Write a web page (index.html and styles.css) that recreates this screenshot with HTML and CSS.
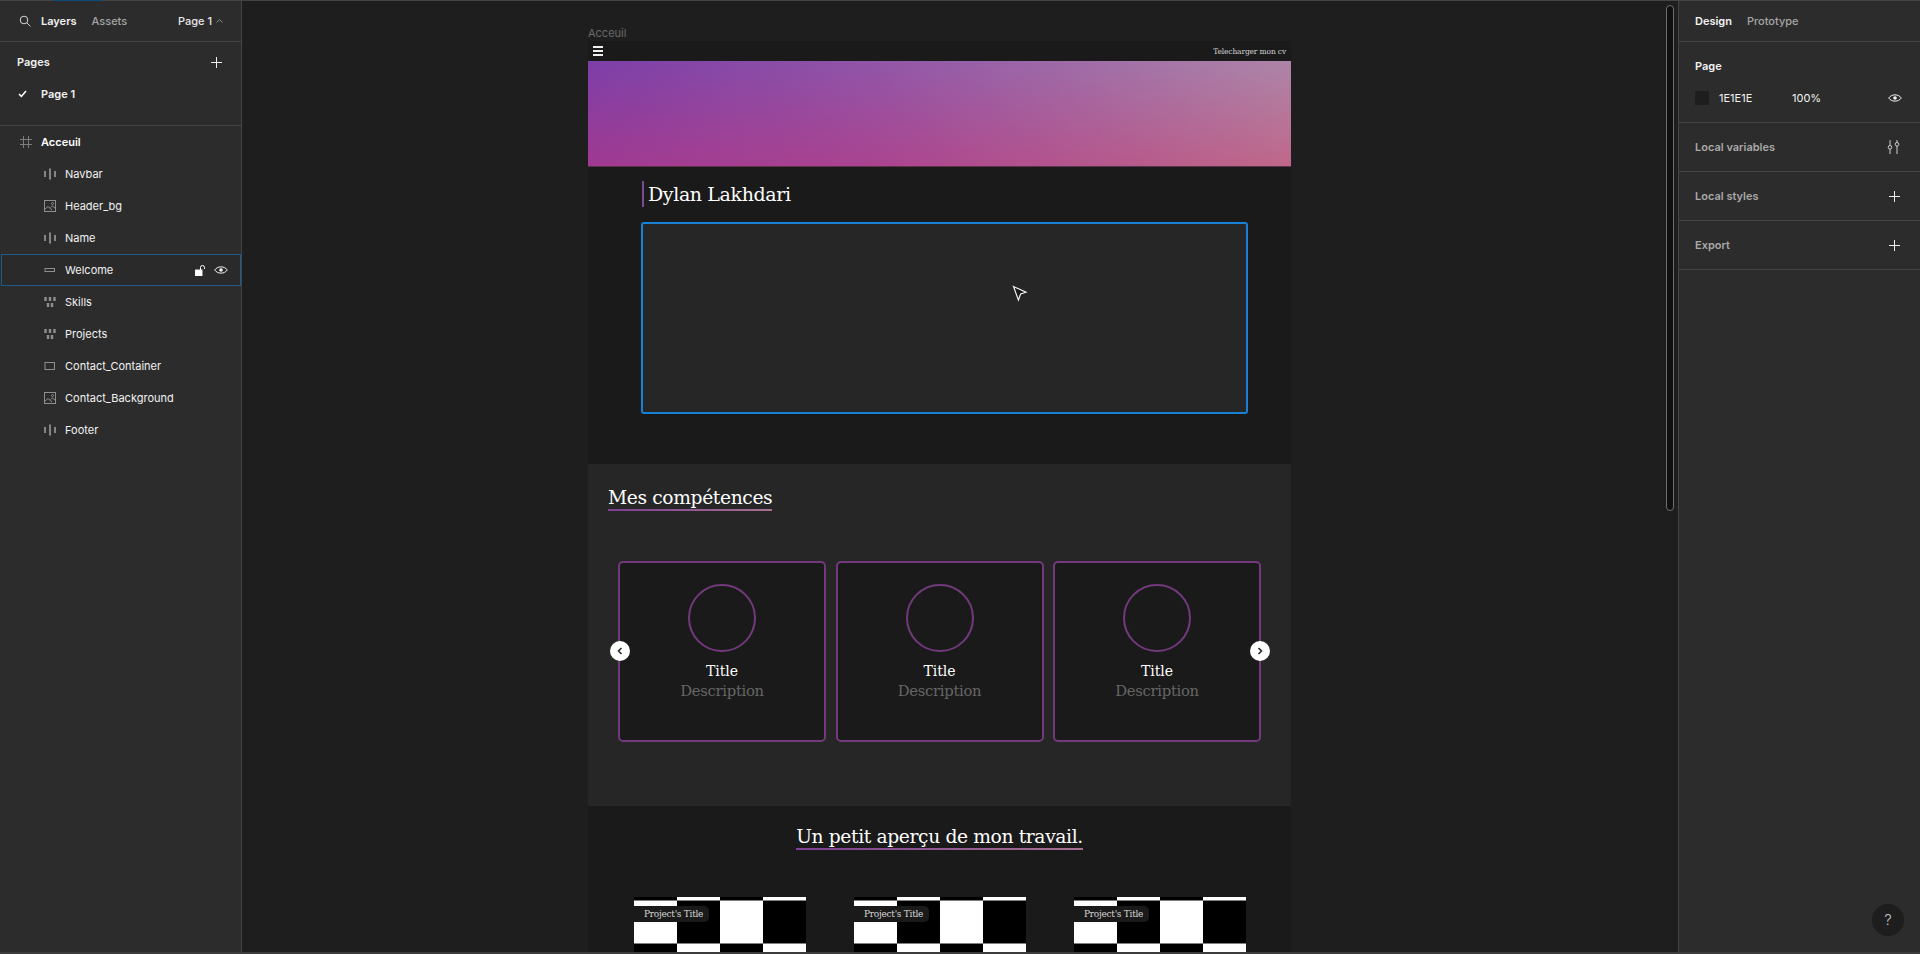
FILE: index.html
```html
<!DOCTYPE html>
<html lang="fr">
<head>
<meta charset="utf-8">
<title>Acceuil</title>
<link rel="stylesheet" href="styles.css">
</head>
<body>
<div class="app">
  <span class="tab-mark"></span>
  <aside class="panel left">
    <header class="tabs left-tabs">
      <svg class="ico search" viewBox="0 0 12 12"><circle cx="5" cy="5" r="3.8"/><path d="M8 8l3.4 3.4"/></svg>
      <span class="tab on">Layers</span>
      <span class="tab">Assets</span>
      <span class="page-pick">Page 1<svg class="chev" viewBox="0 0 7 4"><path d="M.5 3.5L3.5.7l3 2.8"/></svg></span>
    </header>
    <section class="pages">
      <div class="pages-head"><b>Pages</b><svg class="ico plus" viewBox="0 0 11 11"><path d="M5.5 0v11M0 5.5h11"/></svg></div>
      <div class="page-row"><svg class="check" viewBox="0 0 9 8"><path d="M1 4l2.4 2.4L8 1"/></svg><b>Page 1</b></div>
    </section>
    <ul class="layers">
      <li class="layer root"><svg class="lico hash" viewBox="0 0 12 12"><path d="M3.5 0v12M8.5 0v12M0 3.500h12M0 8.500h12"/></svg><span>Acceuil</span></li>
      <li class="layer"><svg class="lico" viewBox="0 0 12 12"><path class="fat" d="M1 3v6M6 .5v11M11 3v6"/></svg><span>Navbar</span></li>
      <li class="layer"><svg class="lico" viewBox="0 0 12 12"><rect x=".5" y=".5" width="11" height="11"/><path d="M.5 9.500l3.500-3 4 3.500M6.500 7.500l2-1.500 3 2.500"/><circle cx="8.500" cy="3.500" r="1"/></svg><span>Header_bg</span></li>
      <li class="layer"><svg class="lico" viewBox="0 0 12 12"><path class="fat" d="M1 3v6M6 .5v11M11 3v6"/></svg><span>Name</span></li>
      <li class="layer selected"><svg class="lico" viewBox="0 0 12 12"><rect x="1" y="4.500" width="9.500" height="3"/></svg><span>Welcome</span>
        <svg class="lock" viewBox="0 0 11 11"><rect x="0" y="5" width="7" height="6" fill="#fff"/><path d="M5.500 5V2.500a2 2 0 0 1 4 0V4" fill="none" stroke="#fff"/></svg>
        <svg class="eye" viewBox="0 0 14 10"><path d="M.7 5C3.500.8 10.500.8 13.300 5 10.500 9.200 3.500 9.200.7 5z"/><circle cx="7" cy="5" r="1.800"/></svg>
      </li>
      <li class="layer"><svg class="lico" viewBox="0 0 12 12"><path class="grid" d="M1.500 1v4M6 1v4M10.500 1v4M4 7v4M8 7v4"/></svg><span>Skills</span></li>
      <li class="layer"><svg class="lico" viewBox="0 0 12 12"><path class="grid" d="M1.500 1v4M6 1v4M10.500 1v4M4 7v4M8 7v4"/></svg><span>Projects</span></li>
      <li class="layer"><svg class="lico" viewBox="0 0 12 12"><rect x="1" y="2.500" width="9.500" height="7"/></svg><span>Contact_Container</span></li>
      <li class="layer"><svg class="lico" viewBox="0 0 12 12"><rect x=".5" y=".5" width="11" height="11"/><path d="M.5 9.500l3.500-3 4 3.500M6.500 7.500l2-1.500 3 2.500"/><circle cx="8.500" cy="3.500" r="1"/></svg><span>Contact_Background</span></li>
      <li class="layer"><svg class="lico" viewBox="0 0 12 12"><path class="fat" d="M1 3v6M6 .5v11M11 3v6"/></svg><span>Footer</span></li>
    </ul>
  </aside>

  <main class="canvas">
    <div class="frame-label">Acceuil</div>
    <div class="frame">
      <nav class="navbar">
        <span class="burger"><i></i><i></i><i></i></span>
        <span class="cv">Telecharger mon cv</span>
      </nav>
      <div class="hero"></div>
      <section class="intro">
        <h1 class="name">Dylan Lakhdari</h1>
        <div class="welcome"></div>
      </section>
      <section class="skills">
        <h2 class="sec-title">Mes compétences</h2>
        <div class="cards">
          <span class="arrow prev"><svg viewBox="0 0 6 8"><path d="M4.500 1L1.500 4l3 3"/></svg></span>
          <article class="card"><div class="ring"></div><h3>Title</h3><p>Description</p></article>
          <article class="card"><div class="ring"></div><h3>Title</h3><p>Description</p></article>
          <article class="card"><div class="ring"></div><h3>Title</h3><p>Description</p></article>
          <span class="arrow next"><svg viewBox="0 0 6 8"><path d="M1.500 1l3 3-3 3"/></svg></span>
        </div>
      </section>
      <section class="projects">
        <h2 class="sec-title center">Un petit aperçu de mon travail.</h2>
        <div class="shots">
          <div class="shot"><span class="shot-label">Project's Title</span></div>
          <div class="shot"><span class="shot-label">Project's Title</span></div>
          <div class="shot"><span class="shot-label">Project's Title</span></div>
        </div>
      </section>
    </div>
    <svg class="cursor" viewBox="0 0 16 18"><path d="M1.500 1.500L14 7.200 8.600 9 6.400 15z"/></svg>
    <div class="scrollbar"></div>
  </main>

  <aside class="panel right">
    <header class="tabs right-tabs">
      <span class="tab on">Design</span>
      <span class="tab">Prototype</span>
    </header>
    <section class="page-props">
      <h4>Page</h4>
      <div class="fill-row">
        <span class="swatch"></span>
        <span class="hex">1E1E1E</span>
        <span class="pct">100%</span>
        <svg class="eye" viewBox="0 0 14 10"><path d="M.7 5C3.500.8 10.500.8 13.300 5 10.500 9.200 3.500 9.200.7 5z"/><circle cx="7" cy="5" r="1.800"/></svg>
      </div>
    </section>
    <section class="prop-row"><span>Local variables</span><svg class="ico tune" viewBox="0 0 13 14"><path d="M3 0v5.500M3 9v5M10 0v2.500M10 6v8"/><circle cx="3" cy="7.300" r="1.800"/><circle cx="10" cy="4.300" r="1.800"/></svg></section>
    <section class="prop-row"><span>Local styles</span><svg class="ico plus" viewBox="0 0 11 11"><path d="M5.500 0v11M0 5.500h11"/></svg></section>
    <section class="prop-row"><span>Export</span><svg class="ico plus" viewBox="0 0 11 11"><path d="M5.500 0v11M0 5.500h11"/></svg></section>
    <span class="help">?</span>
  </aside>
</div>
</body>
</html>
```
FILE: styles.css
```css
* { box-sizing: border-box; }
html, body { margin: 0; height: 954px; overflow: hidden; background: #1e1e1e; }
body { font-family: Inter, "Liberation Sans", sans-serif; font-size: 11px; color: #f2f2f2; }
svg { display: block; fill: none; stroke: currentColor; }
h1, h2, h3, h4, p, ul { margin: 0; padding: 0; list-style: none; font-weight: 400; }

.app { position: relative; display: flex; height: 954px; border-top: 1px solid #444; border-bottom: 2px solid #3c3c3c; }
.tab-mark { position: absolute; left: 53px; top: -1px; width: 49px; height: 1px; background: #0c4a78; }

.panel { width: 242px; flex: none; background: #2c2c2c; position: relative; }
.panel.left { border-right: 1px solid #444; }
.panel.right { border-left: 1px solid #444; }

.tabs { display: flex; align-items: center; height: 41px; border-bottom: 1px solid #444; font-weight: 500; }
.tab { color: #a5a5a5; }
.tab.on { color: #f2f2f2; font-weight: 600; }
.left-tabs { padding-left: 19px; }
.left-tabs .search { width: 12px; height: 12px; margin-right: 10px; color: #d8d8d8; }
.left-tabs .tab + .tab { margin-left: 15px; }
.page-pick { display: flex; align-items: center; margin-left: auto; margin-right: 18px; gap: 4px; color: #e8e8e8; }
.chev { width: 7px; height: 4px; color: #8a8a8a; }
.right-tabs { padding-left: 16px; gap: 15px; }

.pages { height: 84px; border-bottom: 1px solid #444; padding: 0 19px 0 17px; }
.pages-head { display: flex; justify-content: space-between; align-items: center; height: 40px; }
.pages-head b { font-weight: 600; }
.plus { width: 11px; height: 11px; color: #eee; }
.page-row { display: flex; align-items: center; height: 22px; margin-top: 1px; }
.page-row b { font-weight: 600; margin-left: 14px; }
.check { width: 9px; height: 8px; stroke-width: 1.600; margin-left: 1px; color: #fff; }

.layer { display: flex; align-items: center; height: 32px; padding-left: 43px; margin: 0 0 0 1px; width: 240px; }
.layer span { margin-left: 9px; }
.lico { width: 12px; height: 12px; color: #8f8f8f; }
.lico .fat { stroke-width: 1.800; }
.lico .grid { stroke-width: 2.400; }
.layer.root { padding-left: 19px; font-weight: 600; color: #fff; }
.layer.root .lico { color: #7c7c7c; }
.layer.selected { border: 1px solid #1f5c8e; background: #2a2a2a; }
.layer.selected .lico { margin-left: -1px; }
.lock { width: 11px; height: 11px; margin-left: auto; }
.selected .eye { margin-left: 8px; margin-right: 12px; }
.eye { width: 14px; height: 10px; color: #f2f2f2; }
.eye circle { fill: currentColor; stroke: none; }

.page-props { height: 81px; border-bottom: 1px solid #444; padding: 17px 16px 0; }
.page-props h4 { font-weight: 600; font-size: 11px; line-height: 14px; color: #f2f2f2; }
.fill-row { display: flex; align-items: center; margin-top: 18px; height: 14px; }
.swatch { width: 14px; height: 14px; background: #1e1e1e; }
.hex { margin-left: 10px; width: 73px; }
.pct { flex: 1; }
.fill-row .eye { margin-right: 2px; }
.prop-row { display: flex; align-items: center; justify-content: space-between; height: 49px; border-bottom: 1px solid #444; padding: 0 20px 0 16px; font-weight: 600; color: #a9a9a9; }
.tune { width: 13px; height: 14px; color: #cfcfcf; }
.help { position: absolute; left: 193px; top: 903px; width: 32px; height: 32px; border-radius: 50%; background: #1e1e1e; color: #c8c8c8; font-size: 15px; font-weight: 300; line-height: 32px; text-align: center; }

.canvas { position: relative; flex: 1; overflow: hidden; background: #1e1e1e; }
.frame-label { position: absolute; left: 346px; top: 26px; color: #6a6a6a; font-size: 11px; line-height: 13px; }
.frame { position: absolute; left: 346px; top: 40px; width: 703px; height: 1000px; background: #1a1a1a; font-family: "DejaVu Serif", "Liberation Serif", serif; }
.navbar { display: flex; align-items: center; justify-content: space-between; height: 20px; padding: 0 5px; background: #1a1a1a; }
.burger { display: grid; gap: 2px; width: 10px; }
.burger i { display: block; height: 2px; background: #f0f0f0; }
.cv { font-size: 7.500px; letter-spacing: -.14px; color: #d6d6d6; }

.hero { position: relative; height: 106px; border-bottom: 1px solid #5a3348; background: linear-gradient(90deg, #a03a92, #ab4490 40%, #c0688a); }
.hero::before { content: ""; position: absolute; inset: 0; background: linear-gradient(90deg, #7c3fa8, #9055a8 40%, #ad85a8); -webkit-mask-image: linear-gradient(180deg, #000, transparent); mask-image: linear-gradient(180deg, #000, transparent); }

.intro { height: 297px; padding: 14px 0 0 54px; }
.name { display: flex; align-items: center; height: 26px; padding-left: 4px; border-left: 2px solid #7d4a94; font-size: 19px; line-height: 26px; letter-spacing: -.02em; color: #fff; }
.welcome { width: 607px; height: 192px; margin: 15px 0 0 -1px; border: 2px solid #1681d6; border-radius: 3px; background: #262626; }

.skills { height: 342px; padding: 21px 0 0 20px; background: #262626; }
.sec-title { display: inline-block; font-size: 18.700px; line-height: 25px; letter-spacing: -.02em; color: #fff; height: 26px; border-bottom: 2px solid #8a4a90; border-image: linear-gradient(90deg, #7d3f94, #a87090) 1; }
.cards { position: relative; display: flex; gap: 9.500px; margin: 50px 0 0 10px; }
.card { width: 208px; height: 181px; border: 2px solid #723a7c; border-radius: 5px; background: #1a1a1a; padding-top: 21px; text-align: center; }
.ring { width: 68px; height: 68px; margin: 0 auto 9px; border: 2px solid #723a7c; border-radius: 50%; }
.card h3 { font-size: 14px; line-height: 20px; color: #fff; }
.card p { font-size: 14.800px; line-height: 19px; color: #666; letter-spacing: -.02em; }
.arrow { position: absolute; top: 80px; width: 20px; height: 20px; border-radius: 50%; background: #fff; color: #222; display: flex; align-items: center; justify-content: center; z-index: 1; }
.arrow svg { width: 6px; height: 8px; stroke-width: 1.500; }
.arrow.prev { left: -8px; }
.arrow.next { left: 632px; }

.projects { padding: 18px 0 0; text-align: center; }
.shots { display: flex; gap: 48px; margin: 47px 0 0 46px; }
.shot { position: relative; width: 172px; height: 172px; background: conic-gradient(#000 25%, #fff 0 50%, #000 0 75%, #fff 0) 0 3.500px / 86px 86px; text-align: left; }
.shot-label { position: absolute; left: 0; top: 9px; width: 75px; height: 16px; padding-left: 10px; border-radius: 0 5px 5px 0; background: #1a1a1a; color: #d8d8d8; font-size: 9px; line-height: 16px; letter-spacing: -.03em; }

.cursor { position: absolute; left: 770px; top: 284px; width: 16px; height: 18px; fill: #1a1a1a; stroke: #f2f2f2; stroke-width: 1.200; }
.scrollbar { position: absolute; left: 1424px; top: 4px; width: 8px; height: 506px; border: 1px solid #6e6e6e; border-radius: 4px; background: #101010; }
```
